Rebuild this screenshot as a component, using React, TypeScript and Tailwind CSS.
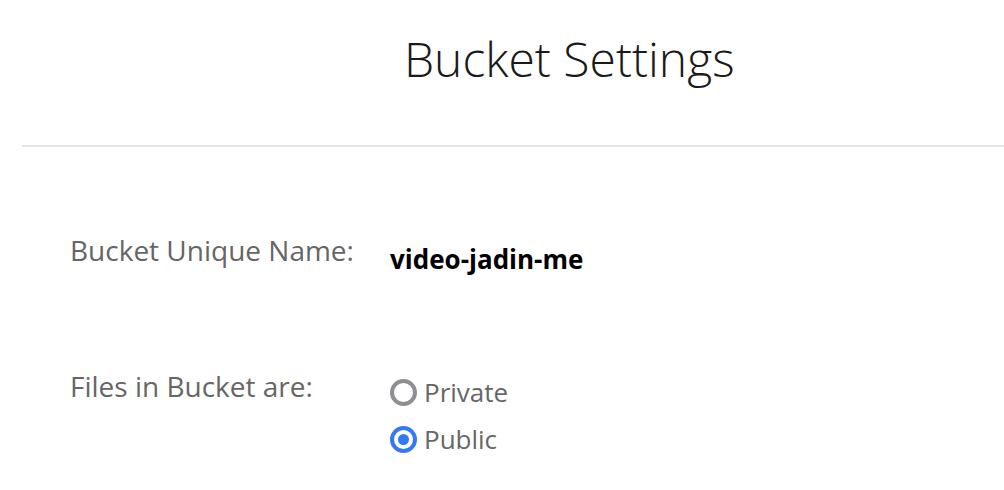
export default function App() {
  return (
    <div
      className="w-[1004px] h-[490px] bg-white overflow-hidden"
      style={{ fontFamily: '"Open Sans", sans-serif' }}
    >
      <div className="pl-[404px] pt-[27px] h-[145px]">
        <h1 className="text-[48px] font-light text-[#1a1a1a] leading-[64px]">Bucket Settings</h1>
      </div>
      <div className="ml-[22px] h-[2px] bg-[#e5e5e5]" />

      <div className="pl-[70px] pt-[85px] grid grid-cols-[320px_1fr] gap-y-[91px]">
        <div className="text-[28px] text-[#666666] leading-[36px]">Bucket Unique Name:</div>
        <div className="text-[26px] font-bold text-black leading-[36px] pt-[9px]">video-jadin-me</div>

        <div className="text-[28px] text-[#666666] leading-[36px]">Files in Bucket are:</div>
        <div className="flex flex-col gap-[11px] pt-[6px]">
          <label className="flex items-center gap-[7px] h-[36px]">
            <span className="w-[27px] h-[27px] rounded-full border-[4px] border-[#8e8e93] bg-white" />
            <span className="text-[26px] text-[#666666] leading-[36px]">Private</span>
          </label>
          <label className="flex items-center gap-[7px] h-[36px]">
            <span className="w-[27px] h-[27px] rounded-full border-[4px] border-[#3478f6] bg-white flex items-center justify-center">
              <span className="w-[11px] h-[11px] rounded-full bg-[#3478f6]" />
            </span>
            <span className="text-[26px] text-[#666666] leading-[36px]">Public</span>
          </label>
        </div>
      </div>
    </div>
  )
}
